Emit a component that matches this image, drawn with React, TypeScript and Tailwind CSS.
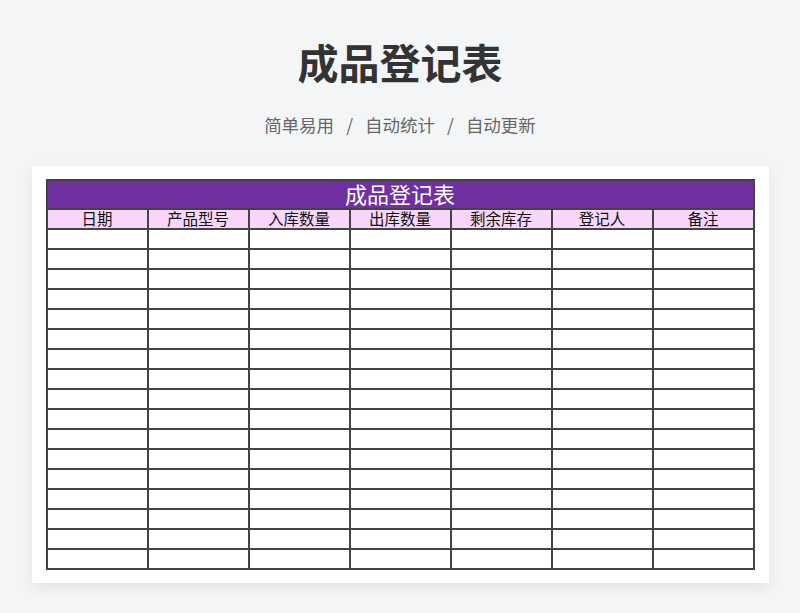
import React from "react";

const cols = ["日期", "产品型号", "入库数量", "出库数量", "剩余库存", "登记人", "备注"];
const rows = Array.from({ length: 17 }, (_, i) => i);

export default function App() {
  return (
    <div
      className="w-[800px] h-[613px] bg-[#f4f5f7] flex flex-col items-center overflow-hidden"
      style={{ fontFamily: '"Noto Sans CJK SC", "Noto Sans", sans-serif' }}
    >
      <div className="mt-[38px] h-[46px] flex items-center text-[41px] font-bold text-[#333333] leading-none">
        成品登记表
      </div>
      <div className="mt-[29px] h-[24px] flex items-center text-[17.5px] text-[#666666] leading-none">
        <span>简单易用</span>
        <span className="mx-[12px]">/</span>
        <span>自动统计</span>
        <span className="mx-[12px]">/</span>
        <span>自动更新</span>
      </div>
      <div className="mt-[29px] w-[737px] bg-white shadow-[0_4px_14px_rgba(0,0,0,0.08)] pt-[13px] pb-[13px] px-[14px]">
        <table className="w-[709px] table-fixed border-collapse">
          <tbody>
            <tr>
              <td
                colSpan={7}
                className="h-[29px] border-2 border-[#444444] bg-[#7030a0] text-white text-center p-0 align-middle"
              >
                <div className="h-[25px] flex items-center justify-center text-[22px] leading-none -mt-[3px]">
                  成品登记表
                </div>
              </td>
            </tr>
            <tr>
              {cols.map((c) => (
                <td
                  key={c}
                  className="h-[20px] border-2 border-[#444444] bg-[#f8d6fa] text-[#111] text-center p-0 align-middle"
                >
                  <div className="h-[16px] flex items-center justify-center text-[15.5px] leading-none -mt-[1px]">
                    {c}
                  </div>
                </td>
              ))}
            </tr>
            {rows.map((r) => (
              <tr key={r}>
                {cols.map((c) => (
                  <td key={c} className="h-[20px] border-2 border-[#444444] p-0"></td>
                ))}
              </tr>
            ))}
          </tbody>
        </table>
      </div>
    </div>
  );
}
